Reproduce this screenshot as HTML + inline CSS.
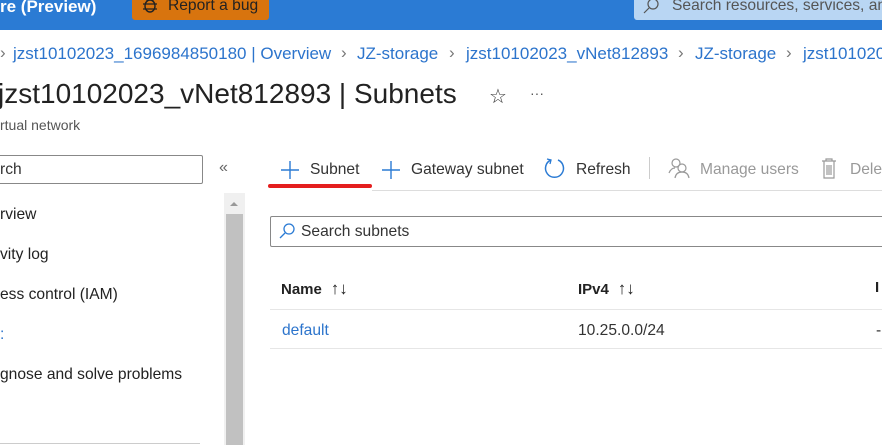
<!DOCTYPE html><html><head><style>
body{margin:0;width:882px;height:445px;overflow:hidden;background:#fff;font-family:"Liberation Sans",sans-serif;position:relative}
.a{position:absolute;white-space:nowrap}
.b{font-size:17px;color:#2c74cc;top:44px}
.s{font-size:17px;color:#777;top:43px}
.m{font-size:15.6px;color:#222}
</style></head><body>
<div class="a" style="left:0;top:0;width:882px;height:30px;background:#2b7bd4"></div>
<div class="a" style="left:0;top:-3px;color:#fff;font-weight:bold;font-size:17px">re (Preview)</div>
<div class="a" style="left:132px;top:0;width:137px;height:20px;background:#d8740e;border-radius:0 0 3px 3px"></div>
<svg class="a" style="left:141px;top:-2px" width="18" height="18"><ellipse cx="9" cy="8" rx="5" ry="6" fill="none" stroke="#222" stroke-width="1.4"/><path d="M2 6 H16 M2 11 H16 M5 1 L7 3 M13 1 L11 3" stroke="#222" stroke-width="1.3"/></svg>
<div class="a" style="left:168px;top:-3px;font-size:15.6px;color:#222">Report a bug</div>
<div class="a" style="left:634px;top:0;width:248px;height:20px;background:#b9d6f3;border-radius:0 0 0 3px"></div>
<svg class="a" style="left:642px;top:-2px" width="18" height="16"><circle cx="11" cy="6" r="5" fill="none" stroke="#555" stroke-width="1.2"/><line x1="7" y1="10" x2="2" y2="15" stroke="#555" stroke-width="1.2"/></svg>
<div class="a" style="left:672px;top:-3px;font-size:15.6px;color:#555">Search resources, services, and</div>
<div class="a s" style="left:0">›</div>
<div class="a b" style="left:13px">jzst10102023_1696984850180 | Overview</div>
<div class="a s" style="left:341px">›</div>
<div class="a b" style="left:357px">JZ-storage</div>
<div class="a s" style="left:449px">›</div>
<div class="a b" style="left:466px">jzst10102023_vNet812893</div>
<div class="a s" style="left:678px">›</div>
<div class="a b" style="left:695px">JZ-storage</div>
<div class="a s" style="left:786px">›</div>
<div class="a b" style="left:803px">jzst10102023</div>
<div class="a" style="left:-2px;top:78px;font-size:28px;color:#222">jzst10102023_vNet812893 | Subnets</div>
<div class="a" style="left:489px;top:84px;font-size:20px;color:#333">☆</div>
<div class="a" style="left:530px;top:85px;font-size:14px;color:#555">···</div>
<div class="a" style="left:0;top:117px;font-size:14px;color:#555">rtual network</div>
<div class="a" style="left:-5px;top:155px;width:206px;height:27px;border:1px solid #888;border-radius:2px"></div>
<div class="a m" style="left:0;top:161px;color:#333">rch</div>
<div class="a" style="left:219px;top:159px;font-size:16px;color:#666">«</div>
<div class="a m" style="left:0;top:206px">rview</div>
<div class="a m" style="left:0;top:246px">vity log</div>
<div class="a m" style="left:0;top:286px">ess control (IAM)</div>
<div class="a m" style="left:0;top:326px;color:#2c74cc">:</div>
<div class="a m" style="left:0;top:366px">gnose and solve problems</div>
<div class="a" style="left:224px;top:193px;width:21px;height:252px;background:#f0f0f0"></div>
<div class="a" style="left:226px;top:214px;width:17px;height:231px;background:#c1c1c1"></div>
<div class="a" style="left:230px;top:202px;width:0;height:0;border:4px solid transparent;border-bottom:4px solid #999;border-top:0"></div>
<div class="a" style="left:0;top:443px;width:200px;height:1px;background:#ccc"></div>
<svg class="a" style="left:280px;top:160px" width="20" height="20"><path d="M10 1 V19 M1 10 H19" stroke="#2b7bd4" stroke-width="1.4"/></svg>
<div class="a m" style="left:310px;top:161px;color:#333">Subnet</div>
<svg class="a" style="left:381px;top:160px" width="20" height="20"><path d="M10 1 V19 M1 10 H19" stroke="#2b7bd4" stroke-width="1.4"/></svg>
<div class="a m" style="left:411px;top:161px;color:#333">Gateway subnet</div>
<svg class="a" style="left:543px;top:157px" width="24" height="24"><path d="M8 3 A9 9 0 1 0 15 3" fill="none" stroke="#2b7bd4" stroke-width="1.5"/><path d="M4 2 L8 3 L7 7" fill="none" stroke="#2b7bd4" stroke-width="1.3"/></svg>
<div class="a m" style="left:576px;top:161px;color:#333">Refresh</div>
<div class="a" style="left:649px;top:157px;width:1px;height:22px;background:#ccc"></div>
<svg class="a" style="left:668px;top:157px" width="24" height="24"><circle cx="8" cy="6" r="4" fill="none" stroke="#999" stroke-width="1.2"/><circle cx="14" cy="11" r="4" fill="none" stroke="#999" stroke-width="1.2"/><path d="M1 16 Q3 11 7 11 M7 21 Q8 15 14 15 Q20 15 21 21" fill="none" stroke="#999" stroke-width="1.2"/></svg>
<div class="a m" style="left:700px;top:161px;color:#999">Manage users</div>
<svg class="a" style="left:820px;top:157px" width="18" height="24"><path d="M2 4 H16 M6 4 V2 H12 V4 M4 4 V21 H14 V4 M7 8 V18 M9 8 V18 M11 8 V18" fill="none" stroke="#999" stroke-width="1.2"/></svg>
<div class="a m" style="left:850px;top:161px;color:#999">Dele</div>
<div class="a" style="left:268px;top:184px;width:104px;height:4px;background:#e41e1e;border-radius:2px"></div>
<div class="a" style="left:372px;top:190px;width:510px;height:1px;background:#ddd"></div>
<div class="a" style="left:270px;top:216px;width:620px;height:29px;border:1px solid #888;border-radius:2px"></div>
<svg class="a" style="left:278px;top:222px" width="18" height="18"><circle cx="11" cy="7" r="5" fill="none" stroke="#2b7bd4" stroke-width="1.3"/><line x1="7" y1="11" x2="2" y2="16" stroke="#2b7bd4" stroke-width="1.3"/></svg>
<div class="a m" style="left:301px;top:223px;color:#333">Search subnets</div>
<div class="a" style="left:281px;top:279px;font-size:15px;color:#222;font-weight:bold">Name <span style="font-weight:normal;font-size:17px">&nbsp;↑↓</span></div>
<div class="a" style="left:578px;top:279px;font-size:15px;color:#222;font-weight:bold">IPv4 <span style="font-weight:normal;font-size:17px">&nbsp;↑↓</span></div>
<div class="a" style="left:875px;top:279px;font-size:15px;color:#222;font-weight:bold">I</div>
<div class="a" style="left:270px;top:309px;width:612px;height:1px;background:#e6e6e6"></div>
<div class="a m" style="left:282px;top:322px;color:#2c74cc">default</div>
<div class="a m" style="left:578px;top:322px;color:#333">10.25.0.0/24</div>
<div class="a m" style="left:876px;top:322px;color:#333">-</div>
<div class="a" style="left:270px;top:348px;width:612px;height:1px;background:#e6e6e6"></div>
</body></html>
